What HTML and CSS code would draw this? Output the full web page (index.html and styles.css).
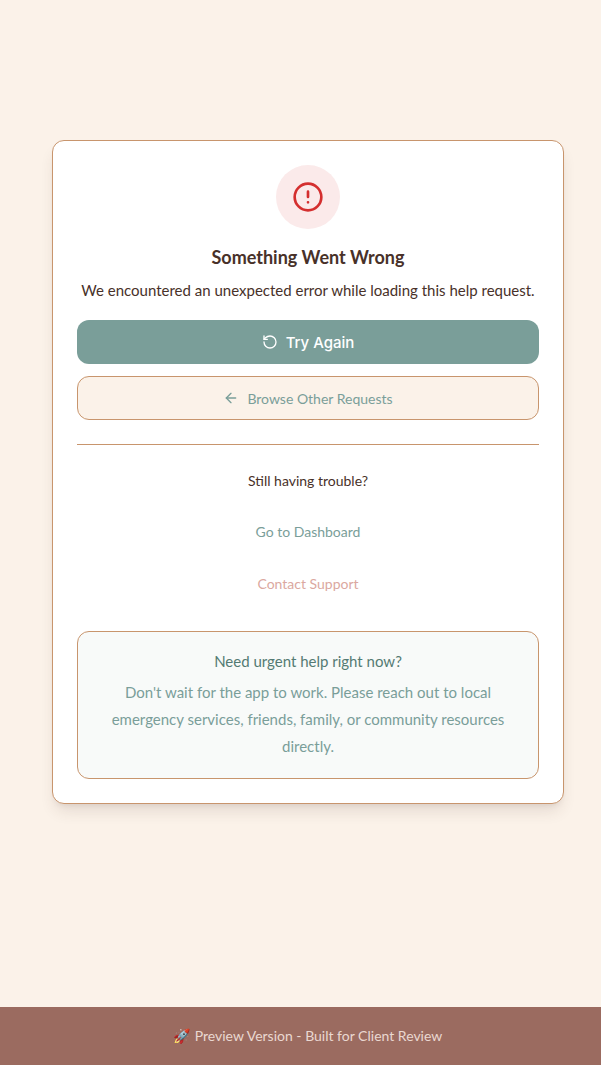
FILE: index.html
```html
<!DOCTYPE html>
<html lang="en">
<head>
<meta charset="utf-8">
<meta name="viewport" content="width=device-width, initial-scale=1">
<title>Something Went Wrong</title>
<link rel="stylesheet" href="styles.css">
</head>
<body>
<main class="page">
  <section class="card">
    <div class="badge">
      <svg class="badge-icon" viewBox="0 0 24 24" aria-hidden="true"><circle cx="12" cy="12" r="10"/><path d="M12 8v4M12 16h.01"/></svg>
    </div>
    <h1 class="title">Something Went Wrong</h1>
    <p class="lead">We encountered an unexpected error while loading this help request.</p>
    <div class="actions">
      <button class="btn btn-primary" type="button">
        <svg class="icon" viewBox="0 0 24 24" aria-hidden="true"><path d="M3 12a9 9 0 1 0 9-9 9.75 9.75 0 0 0-6.74 2.74L3 8"/><path d="M3 3v5h5"/></svg>
        Try Again
      </button>
      <a class="btn btn-outline" href="#">
        <svg class="icon" viewBox="0 0 24 24" aria-hidden="true"><path d="m12 19-7-7 7-7"/><path d="M19 12H5"/></svg>
        Browse Other Requests
      </a>
    </div>
    <div class="trouble">
      <p class="trouble-text">Still having trouble?</p>
      <a class="link" href="#">Go to Dashboard</a>
      <a class="link link-support" href="#">Contact Support</a>
    </div>
    <div class="notice">
      <h2 class="notice-title">Need urgent help right now?</h2>
      <p class="notice-text">Don't wait for the app to work. Please reach out to local emergency services, friends, family, or community resources directly.</p>
    </div>
  </section>
</main>
<footer class="footer">🚀 Preview Version - Built for Client Review</footer>
</body>
</html>
```
FILE: styles.css
```css
* {
  box-sizing: border-box;
}

body {
  display: flex;
  flex-direction: column;
  min-height: 100vh;
  margin: 0;
  background: #fbf2e9;
  color: #483129;
  font-family: Lato, "Noto Color Emoji", sans-serif;
}

h1, h2, p {
  margin: 0;
  font-weight: 400;
}

.page {
  flex: 1;
  display: flex;
  justify-content: center;
  align-items: flex-start;
  padding: 140px 16px 64px 31px;
}

.card {
  width: 100%;
  max-width: 512px;
  padding: 24px;
  border: 1px solid #c8956d;
  border-radius: 12px;
  background: #fff;
  box-shadow: 0 10px 15px -3px rgba(72, 49, 41, 0.12), 0 4px 6px -4px rgba(72, 49, 41, 0.12);
  text-align: center;
}

.badge {
  display: flex;
  align-items: center;
  justify-content: center;
  width: 64px;
  height: 64px;
  margin: 0 auto 16px;
  border-radius: 50%;
  background: #fbeaea;
}

.badge-icon,
.icon {
  width: 32px;
  height: 32px;
  fill: none;
  stroke: #d42f2f;
  stroke-width: 2;
  stroke-linecap: round;
  stroke-linejoin: round;
}

.icon {
  width: 16px;
  height: 16px;
  stroke: currentColor;
}

.card .title {
  margin-bottom: 8px;
  font-size: 18px;
  line-height: 24px;
  font-weight: 700;
}

.lead {
  font-size: 15px;
  line-height: 26px;
}

.actions {
  display: grid;
  gap: 12px;
  margin-top: 17px;
}

.btn {
  display: flex;
  align-items: center;
  justify-content: center;
  gap: 8px;
  height: 44px;
  border: 0;
  border-radius: 12px;
  text-decoration: none;
}

.btn-primary {
  background: #7a9e99;
  color: #fff;
  font: 500 15px Inter, sans-serif;
}

.btn-outline {
  border: 1px solid #c8956d;
  background: #fbf2e9;
  color: #7a9e99;
  font-size: 14px;
}

.trouble {
  display: flex;
  flex-direction: column;
  align-items: center;
  gap: 8px;
  margin-top: 24px;
  padding-top: 24px;
  border-top: 1px solid #c8956d;
  font-size: 14px;
}

.trouble-text {
  margin-bottom: 9px;
  line-height: 24px;
}

.link {
  padding: 10px 16px;
  color: #7a9e99;
  line-height: 24px;
  text-decoration: none;
}

.link-support {
  color: #dba8a0;
}

.notice {
  margin-top: 25px;
  padding: 16px 16px 18px;
  border: 1px solid #c8956d;
  border-radius: 12px;
  background: #f8faf9;
  color: #7a9e99;
}

.card .notice-title {
  margin-bottom: 4px;
  color: #547a73;
  font-size: 15px;
  line-height: 27px;
}

.notice-text {
  font-size: 15px;
  line-height: 27px;
}

.footer {
  padding: 16px 16px 16px 31px;
  background: #9b6b60;
  color: #ead8d1;
  font-size: 14px;
  line-height: 26px;
  text-align: center;
}
```
